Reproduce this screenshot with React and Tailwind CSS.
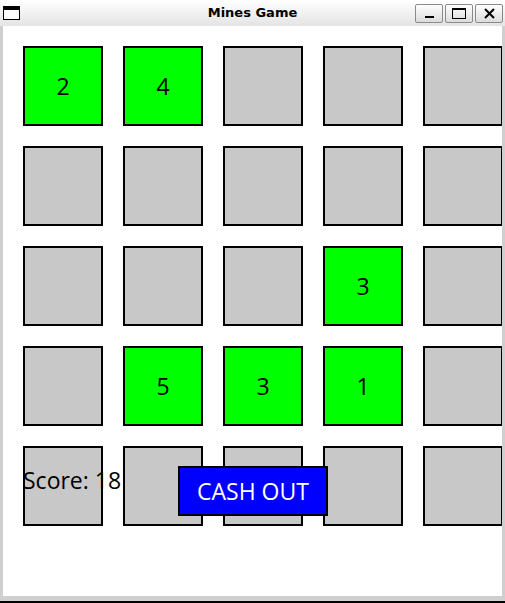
import React from 'react';

const tiles = [
  [2, 4, null, null, null],
  [null, null, null, null, null],
  [null, null, null, 3, null],
  [null, 5, 3, 1, null],
  [null, null, null, null, null],
];

function Tile({ value }) {
  const open = value !== null;
  return (
    <div
      className={`w-[80px] h-[80px] shrink-0 border-2 border-black flex items-center justify-center text-[23px] text-black ${
        open ? 'bg-[#00ff00]' : 'bg-[#c8c8c8]'
      }`}
    >
      {open ? value : ''}
    </div>
  );
}

function TitleButton({ children }) {
  return (
    <div className="w-[28px] h-[19px] border border-[#8a8a8a] rounded-[2px] bg-gradient-to-b from-white to-[#dcdcdc] flex items-center justify-center">
      {children}
    </div>
  );
}

export default function App() {
  return (
    <div className="w-[505px] h-[603px] bg-[#cfcfcf] flex flex-col overflow-hidden" style={{ fontFamily: '"Open Sans", "Noto Sans", sans-serif' }}>
      {/* title bar */}
      <div className="h-[26px] shrink-0 bg-gradient-to-b from-white to-[#e4e4e4] flex items-center relative" style={{ fontFamily: '"DejaVu Sans", sans-serif' }}>
        <div className="ml-[3px] w-[17px] h-[14px] border-[1.5px] border-black border-t-[4px] bg-white" />
        <div className="absolute left-0 right-0 text-center text-[13px] font-bold text-black pointer-events-none">Mines Game</div>
        <div className="ml-auto mr-[2px] flex gap-[2px]">
          <TitleButton>
            <div className="w-[9px] h-[2px] bg-black mt-[8px]" />
          </TitleButton>
          <TitleButton>
            <div className="w-[14px] h-[11px] border border-black border-t-2" />
          </TitleButton>
          <TitleButton>
            <svg width="11" height="11" viewBox="0 0 11 11">
              <path d="M1 1 L10 10 M10 1 L1 10" stroke="black" strokeWidth="2" />
            </svg>
          </TitleButton>
        </div>
      </div>

      {/* client area */}
      <div className="ml-[3px] mr-[3px] h-[570px] shrink-0 bg-white overflow-hidden relative">
        <div className="pt-[20px] pl-[20px] flex flex-col gap-[20px]">
          {tiles.map((row, r) => (
            <div key={r} className="flex gap-[20px]">
              {row.map((v, c) => (
                <Tile key={c} value={v} />
              ))}
            </div>
          ))}
        </div>
        <div className="absolute left-[20px] top-[439px] text-[23px] leading-[30px] text-black">Score: 18</div>
        <button className="absolute left-[175px] top-[440px] w-[150px] h-[50px] bg-[#0000ff] border-2 border-black text-white text-[23px] flex items-center justify-center">
          CASH OUT
        </button>
      </div>
      <div className="h-[5px] shrink-0" />
      <div className="h-[2px] shrink-0 bg-black" />
    </div>
  );
}
